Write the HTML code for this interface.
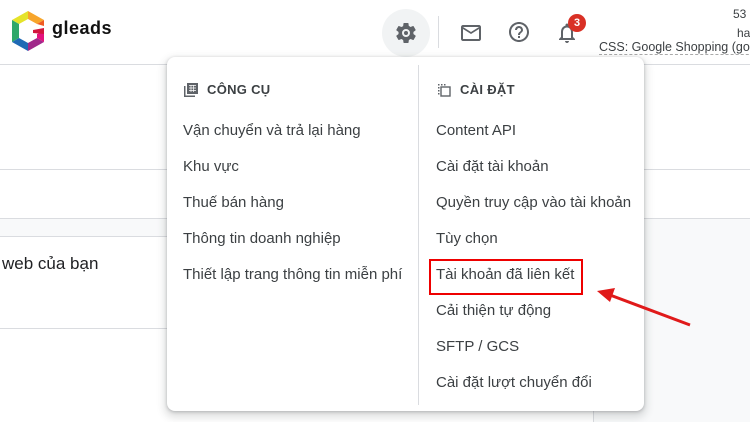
<!DOCTYPE html>
<html><head><meta charset="utf-8"><style>
body{margin:0;width:750px;height:422px;overflow:hidden;background:#fff;font-family:"Liberation Sans",sans-serif;position:relative;color:#3c4043}
.a{position:absolute}
.h{height:1px;background:#dadce0}
.menu{left:167px;top:57px;width:477px;height:354px;background:#fff;border-radius:8px;box-shadow:0 1px 3px rgba(60,64,67,.3),0 4px 8px 3px rgba(60,64,67,.15)}
.it{position:absolute;font-size:15px;white-space:nowrap;color:#3c4043}
.hd{font-size:13px;font-weight:bold;letter-spacing:.3px;color:#3c4043}
</style></head><body>
<div class="a h" style="left:0;top:64px;width:750px"></div>
<div class="a h" style="left:0;top:169px;width:750px"></div>
<div class="a" style="left:0;top:218px;width:750px;height:17px;background:#f8f9fa;border-top:1px solid #dadce0;border-bottom:1px solid #dadce0"></div>
<div class="a h" style="left:0;top:328px;width:592px"></div>
<div class="a" style="left:593px;top:219px;width:157px;height:203px;background:#f8f9fa;border-left:1px solid #dadce0"></div>
<div class="a" style="left:2px;top:254px;font-size:17px;color:#202124">web của bạn</div>

<svg class="a" style="left:9px;top:10px" width="38" height="42" viewBox="0 0 38 40">
<polygon points="19,0 35,9 28,13 19,8" fill="#f7a52b"/><polygon points="19,0 19,8 10,13 3,9" fill="#e5e32a"/>
<polygon points="3,9 10,13 10,27 3,31" fill="#2fa86a"/><polygon points="3,31 10,27 19,32 19,40" fill="#1f6ab5"/>
<polygon points="19,40 19,32 28,27 35,31" fill="#a0288a"/><polygon points="35,31 28,27 28,23 35,21" fill="#e4127d"/>
<polygon points="24,19 35,17 35,23 24,22" fill="#d2163d"/><polygon points="28,13 35,9 35,15" fill="#ef5b22"/>
</svg>
<div class="a" style="left:52px;top:18px;font-size:18px;font-weight:bold;color:#111;letter-spacing:.5px">gleads</div>

<div class="a" style="left:382px;top:9px;width:48px;height:48px;border-radius:50%;background:#f1f3f4"></div>
<svg class="a" style="left:394px;top:21px" width="24" height="24" viewBox="0 0 24 24"><path fill="#5f6368" d="M19.4 13c.04-.32.06-.66.06-1s-.02-.68-.07-1l2.1-1.650c.2-.15.24-.42.12-.64l-2-3.46c-.12-.22-.39-.3-.61-.22l-2.49 1c-.52-.4-1.080-.73-1.69-.98l-.38-2.65A.49.49 0 0 0 14 2h-4c-.25 0-.46.18-.49.42l-.38 2.65c-.61.25-1.17.59-1.69.98l-2.49-1c-.23-.09-.49 0-.61.22l-2 3.46c-.13.22-.07.49.12.64L4.57 11c-.04.32-.07.66-.07 1s.02.68.07 1l-2.1 1.65c-.2.15-.25.42-.12.64l2 3.46c.12.22.39.3.61.22l2.49-1c.52.4 1.08.73 1.69.98l.38 2.65c.03.24.24.42.49.42h4c.25 0 .46-.18.49-.42l.38-2.65c.61-.25 1.17-.59 1.69-.98l2.49 1c.23.09.49 0 .61-.22l2-3.46c.12-.22.07-.49-.12-.64L19.4 13zM12 16a4 4 0 1 1 0-8 4 4 0 0 1 0 8zm0-6a2 2 0 1 0 0 4 2 2 0 0 0 0-4z"/></svg>
<div class="a" style="left:438px;top:16px;width:1px;height:32px;background:#dadce0"></div>
<svg class="a" style="left:459px;top:21px" width="24" height="24" viewBox="0 0 24 24"><path fill="#5f6368" d="M20 4H4c-1.1 0-2 .9-2 2v12c0 1.1.9 2 2 2h16c1.1 0 2-.9 2-2V6c0-1.1-.9-2-2-2zm0 14H4V8l8 5 8-5v10zm-8-7L4 6h16l-8 5z"/></svg>
<svg class="a" style="left:507px;top:20px" width="24" height="24" viewBox="0 0 24 24"><path fill="#5f6368" d="M11 18h2v-2h-2v2zm1-16C6.480 2 2 6.48 2 12s4.48 10 10 10 10-4.48 10-10S17.52 2 12 2zm0 18c-4.41 0-8-3.59-8-8s3.59-8 8-8 8 3.59 8 8-3.59 8-8 8zm0-14c-2.21 0-4 1.79-4 4h2c0-1.1.9-2 2-2s2 .9 2 2c0 2-3 1.75-3 5h2c0-2.25 3-2.5 3-5 0-2.21-1.79-4-4-4z"/></svg>
<svg class="a" style="left:555px;top:21px" width="24" height="24" viewBox="0 0 24 24"><path fill="#5f6368" d="M12 22c1.1 0 2-.9 2-2h-4c0 1.1.9 2 2 2zm6-6v-5c0-3.07-1.63-5.64-4.5-6.32V4c0-.83-.67-1.5-1.5-1.5s-1.5.67-1.5 1.5v.68C7.64 5.36 6 7.92 6 11v5l-2 2v1h16v-1l-2-2zm-2 1H8v-6c0-2.48 1.51-4.5 4-4.5s4 2.02 4 4.5v6z"/></svg>
<div class="a" style="left:568px;top:14px;width:18px;height:18px;border-radius:50%;background:#d93025;color:#fff;font-size:11px;font-weight:bold;text-align:center;line-height:18px">3</div>
<div class="a" style="left:733px;top:7px;font-size:12px;color:#3c4043">53</div>
<div class="a" style="left:737px;top:26px;font-size:12px;color:#3c4043">ha</div>
<div class="a" style="left:599px;top:40px;font-size:12.5px;color:#3c4043;white-space:nowrap;border-bottom:1px dashed #aaa">CSS: Google Shopping (goog</div>

<div class="a menu">
 <div class="a" style="left:251px;top:8px;width:1px;height:340px;background:#dadce0"></div>
 <svg class="a" style="left:17px;top:26px" width="14" height="14" viewBox="0 0 14 14"><rect x="3" y="0" width="11" height="11" fill="#5f6368"/><path d="M0 3v11h11v-1.5H1.5V3z" fill="#5f6368"/><path d="M5 2.5h7M5 5h7M5 7.5h7M7 2v7M9.5 2v7" stroke="#fff" stroke-width=".7"/></svg>
 <div class="it hd" style="left:40px;top:25px">CÔNG CỤ</div>
 <div class="it" style="left:16px;top:65px">Vận chuyển và trả lại hàng</div>
 <div class="it" style="left:16px;top:101px">Khu vực</div>
 <div class="it" style="left:16px;top:137px">Thuế bán hàng</div>
 <div class="it" style="left:16px;top:173px">Thông tin doanh nghiệp</div>
 <div class="it" style="left:16px;top:209px">Thiết lập trang thông tin miễn phí</div>
 <svg class="a" style="left:270px;top:26px" width="14" height="14" viewBox="0 0 14 14"><rect x="4" y="4" width="9" height="9" fill="none" stroke="#5f6368" stroke-width="1.4"/><path d="M1 1h1.5v1.5H1zM4 1h1.5v1.5H4zM7 1h1.5v1.5H7zM1 4h1.5v1.5H1zM1 7h1.5v1.5H1zM1 10h1.5v1.5H1z" fill="#5f6368"/></svg>
 <div class="it hd" style="left:293px;top:25px">CÀI ĐẶT</div>
 <div class="it" style="left:269px;top:65px">Content API</div>
 <div class="it" style="left:269px;top:101px">Cài đặt tài khoản</div>
 <div class="it" style="left:269px;top:137px">Quyền truy cập vào tài khoản</div>
 <div class="it" style="left:269px;top:173px">Tùy chọn</div>
 <div class="it" style="left:269px;top:209px">Tài khoản đã liên kết</div>
 <div class="it" style="left:269px;top:245px">Cải thiện tự động</div>
 <div class="it" style="left:269px;top:281px">SFTP / GCS</div>
 <div class="it" style="left:269px;top:317px">Cài đặt lượt chuyển đổi</div>
 <div class="a" style="left:262px;top:202px;width:150px;height:32px;border:2.5px solid #e00"></div>
</div>
<svg class="a" style="left:0;top:0" width="750" height="422"><line x1="690" y1="325" x2="610" y2="295" stroke="#e01a1a" stroke-width="3"/><polygon points="597,291 615,288 610,302" fill="#e01a1a"/></svg>
</body></html>
